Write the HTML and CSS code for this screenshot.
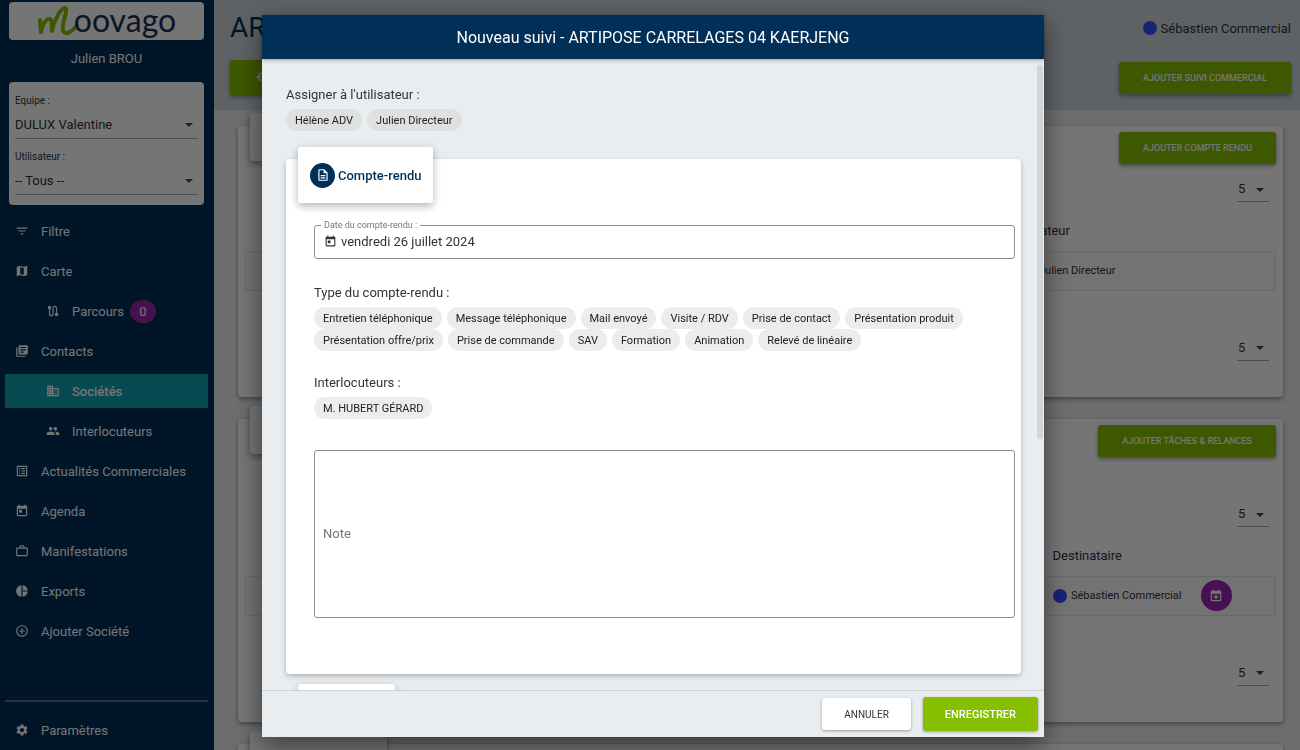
FILE: index.html
```html
<!DOCTYPE html>
<html lang="fr">
<head>
<meta charset="utf-8">
<title>Moovago - Nouveau suivi</title>
<link rel="stylesheet" href="styles.css">
</head>
<body>
<svg class="sprite" aria-hidden="true">
  <symbol id="i-filter" viewBox="0 0 24 24"><path d="M10 18h4v-2h-4v2zM3 6v2h18V6H3zm3 7h12v-2H6v2z"/></symbol>
  <symbol id="i-map" viewBox="0 0 24 24"><path d="M20.5 3l-.16.03L15 5.1 9 3 3.36 4.9c-.21.07-.36.25-.36.48V20.5c0 .28.22.5.5.5l.16-.03L9 18.9l6 2.1 5.64-1.9c.21-.07.36-.25.36-.48V3.5c0-.28-.22-.5-.5-.5zM15 19l-6-2.11V5l6 2.11V19z"/></symbol>
  <symbol id="i-route" viewBox="0 0 24 24"><path d="M19 15.18V7c0-2.21-1.79-4-4-4s-4 1.79-4 4v10c0 1.1-.9 2-2 2s-2-.9-2-2V8.82C8.16 8.4 9 7.3 9 6c0-1.66-1.34-3-3-3S3 4.34 3 6c0 1.3.84 2.4 2 2.82V17c0 2.21 1.79 4 4 4s4-1.79 4-4V7c0-1.1.9-2 2-2s2 .9 2 2v8.18c-1.16.41-2 1.51-2 2.82 0 1.66 1.34 3 3 3s3-1.34 3-3c0-1.3-.84-2.4-2-2.82z"/></symbol>
  <symbol id="i-books" viewBox="0 0 24 24"><path d="M4 6H2v14c0 1.1.9 2 2 2h14v-2H4V6zm16-4H8c-1.1 0-2 .9-2 2v12c0 1.1.9 2 2 2h12c1.1 0 2-.9 2-2V4c0-1.1-.9-2-2-2zm-1 9H9V9h10v2zm-4 4H9v-2h6v2zm4-8H9V5h10v2z"/></symbol>
  <symbol id="i-business" viewBox="0 0 24 24"><path d="M12 7V3H2v18h20V7H12zM6 19H4v-2h2v2zm0-4H4v-2h2v2zm0-4H4V9h2v2zm0-4H4V5h2v2zm4 12H8v-2h2v2zm0-4H8v-2h2v2zm0-4H8V9h2v2zm0-4H8V5h2v2zm10 12h-8v-2h2v-2h-2v-2h2v-2h-2V9h8v10zm-2-8h-2v2h2v-2zm0 4h-2v2h2v-2z"/></symbol>
  <symbol id="i-people" viewBox="0 0 24 24"><path d="M16 11c1.66 0 2.99-1.34 2.99-3S17.66 5 16 5c-1.66 0-3 1.34-3 3s1.34 3 3 3zm-8 0c1.66 0 2.99-1.34 2.99-3S9.66 5 8 5C6.34 5 5 6.34 5 8s1.34 3 3 3zm0 2c-2.33 0-7 1.17-7 3.5V19h14v-2.5c0-2.33-4.67-3.5-7-3.5zm8 0c-.29 0-.62.02-.97.05 1.16.84 1.97 1.97 1.97 3.45V19h6v-2.5c0-2.33-4.67-3.5-7-3.5z"/></symbol>
  <symbol id="i-list" viewBox="0 0 24 24"><path d="M19 5v14H5V5h14m1.1-2H3.9c-.5 0-.9.4-.9.9v16.2c0 .4.4.9.9.9h16.2c.4 0 .9-.5.9-.9V3.9c0-.5-.5-.9-.9-.9zM11 7h6v2h-6V7zm0 4h6v2h-6v-2zm0 4h6v2h-6v-2zM7 7h2v2H7V7zm0 4h2v2H7v-2zm0 4h2v2H7v-2z"/></symbol>
  <symbol id="i-today" viewBox="0 0 24 24"><path d="M19 3h-1V1h-2v2H8V1H6v2H5c-1.11 0-1.99.9-1.99 2L3 19c0 1.1.89 2 2 2h14c1.1 0 2-.9 2-2V5c0-1.1-.9-2-2-2zm0 16H5V8h14v11zM7 10h5v5H7z"/></symbol>
  <symbol id="i-work" viewBox="0 0 24 24"><path d="M14 6V4h-4v2h4zM4 8v11h16V8H4zm16-2c1.11 0 2 .89 2 2v11c0 1.11-.89 2-2 2H4c-1.11 0-2-.89-2-2l.01-11c0-1.11.88-2 1.99-2h4V4c0-1.11.89-2 2-2h4c1.11 0 2 .89 2 2v2h4z"/></symbol>
  <symbol id="i-pie" viewBox="0 0 24 24"><path d="M11 2v20c-5.07-.5-9-4.79-9-10s3.93-9.5 9-10zm2.03 0v8.99H22c-.47-4.74-4.24-8.52-8.97-8.99zm0 11.01V22c4.74-.47 8.5-4.25 8.97-8.99h-8.97z"/></symbol>
  <symbol id="i-add" viewBox="0 0 24 24"><path d="M13 7h-2v4H7v2h4v4h2v-4h4v-2h-4V7zm-1-5C6.48 2 2 6.48 2 12s4.48 10 10 10 10-4.48 10-10S17.52 2 12 2zm0 18c-4.41 0-8-3.59-8-8s3.59-8 8-8 8 3.59 8 8-3.59 8-8 8z"/></symbol>
  <symbol id="i-settings" viewBox="0 0 24 24"><path d="M19.14 12.94c.04-.3.06-.61.06-.94 0-.32-.02-.64-.07-.94l2.03-1.58c.18-.14.23-.41.12-.61l-1.92-3.32c-.12-.22-.37-.29-.59-.22l-2.39.96c-.5-.38-1.03-.7-1.62-.94l-.36-2.54c-.04-.24-.24-.41-.48-.41h-3.84c-.24 0-.43.17-.47.41l-.36 2.54c-.59.24-1.13.57-1.62.94l-2.39-.96c-.22-.08-.47 0-.59.22L2.74 8.87c-.12.21-.08.47.12.61l2.03 1.58c-.05.3-.09.63-.09.94s.02.64.07.94l-2.03 1.58c-.18.14-.23.41-.12.61l1.92 3.32c.12.22.37.29.59.22l2.39-.96c.5.38 1.03.7 1.62.94l.36 2.54c.05.24.24.41.48.41h3.84c.24 0 .44-.17.47-.41l.36-2.54c.59-.24 1.13-.56 1.62-.94l2.39.96c.22.08.47 0 .59-.22l1.92-3.32c.12-.22.07-.47-.12-.61l-2.01-1.58zM12 15.6c-1.98 0-3.6-1.62-3.6-3.6s1.62-3.6 3.6-3.6 3.6 1.62 3.6 3.6-1.62 3.6-3.6 3.6z"/></symbol>
  <symbol id="i-doc" viewBox="0 0 24 24"><path d="M8 16h8v2H8zm0-4h8v2H8zm6-10H6c-1.1 0-2 .9-2 2v16c0 1.1.89 2 1.99 2H18c1.1 0 2-.9 2-2V8l-6-6zm4 18H6V4h7v5h5v11z"/></symbol>
  <symbol id="i-event-add" viewBox="0 0 24 24"><path d="M19 3h-1V1h-2v2H8V1H6v2H5c-1.11 0-1.99.9-1.99 2L3 19c0 1.1.89 2 2 2h14c1.1 0 2-.9 2-2V5c0-1.1-.9-2-2-2zm0 16H5V8h14v11zM11 9.5h2v3h3v2h-3v3h-2v-3H8v-2h3z"/></symbol>
  <symbol id="i-back" viewBox="0 0 24 24"><path d="M20 11H7.83l5.59-5.59L12 4l-8 8 8 8 1.41-1.41L7.83 13H20v-2z"/></symbol>
</svg>

<div class="app">
  <aside class="sidebar">
    <a class="logo" href="#" aria-label="Moovago">
      <svg class="logo-mark" viewBox="0 0 43 36" aria-hidden="true"><path d="M3 17L4 29C5 22 9 15 13 16C16 17 14 23 15 28C17 17 24 5 28 5C32 6 24 21 26 28C29 33 36 28 40 22"/></svg>
      <span class="logo-text">oovago</span>
    </a>
    <p class="user">Julien BROU</p>
    <div class="filters">
      <label for="equipe">Equipe :</label>
      <div class="select"><select id="equipe"><option>DULUX Valentine</option></select></div>
      <label for="utilisateur">Utilisateur :</label>
      <div class="select"><select id="utilisateur"><option>-- Tous --</option></select></div>
    </div>
    <nav class="nav">
      <a href="#"><svg class="icon"><use href="#i-filter"/></svg>Filtre</a>
      <a href="#"><svg class="icon"><use href="#i-map"/></svg>Carte</a>
      <a href="#" class="sub"><svg class="icon"><use href="#i-route"/></svg>Parcours<span class="count">0</span></a>
      <a href="#"><svg class="icon"><use href="#i-books"/></svg>Contacts</a>
      <a href="#" class="sub active"><svg class="icon"><use href="#i-business"/></svg>Sociétés</a>
      <a href="#" class="sub"><svg class="icon"><use href="#i-people"/></svg>Interlocuteurs</a>
      <a href="#"><svg class="icon"><use href="#i-list"/></svg>Actualités Commerciales</a>
      <a href="#"><svg class="icon"><use href="#i-today"/></svg>Agenda</a>
      <a href="#"><svg class="icon"><use href="#i-work"/></svg>Manifestations</a>
      <a href="#"><svg class="icon"><use href="#i-pie"/></svg>Exports</a>
      <a href="#"><svg class="icon"><use href="#i-add"/></svg>Ajouter Société</a>
    </nav>
    <nav class="nav nav-bottom">
      <a href="#"><svg class="icon"><use href="#i-settings"/></svg>Paramètres</a>
    </nav>
  </aside>

  <main class="main">
    <header class="page-head">
      <div class="row">
        <h1>ARTIPOSE</h1>
        <span class="owner"><i class="dot"></i>Sébastien Commercial</span>
      </div>
      <div class="row">
        <button class="btn back" aria-label="Retour"><svg class="icon"><use href="#i-back"/></svg></button>
        <button class="btn">AJOUTER SUIVI COMMERCIAL</button>
      </div>
    </header>
    <div class="panels">
      <section class="panel">
        <div class="tab"></div>
        <button class="btn">AJOUTER COMPTE RENDU</button>
        <div class="select mini"><select aria-label="Lignes par page"><option>5</option></select></div>
        <table class="reports">
          <thead><tr><th>Créateur</th></tr></thead>
          <tbody><tr><td><span class="person"><i class="dot"></i>Julien Directeur</span></td></tr></tbody>
        </table>
        <div class="select mini"><select aria-label="Lignes par page, bas"><option>5</option></select></div>
      </section>
      <section class="panel tall">
        <div class="tab"></div>
        <button class="btn">AJOUTER TÂCHES &amp; RELANCES</button>
        <div class="select mini"><select aria-label="Tâches par page"><option>5</option></select></div>
        <table class="tasks">
          <thead><tr><th>Destinataire</th><th></th></tr></thead>
          <tbody><tr><td><span class="person"><i class="dot"></i>Sébastien Commercial</span></td><td class="action"><button class="round" aria-label="Planifier"><svg class="icon"><use href="#i-event-add"/></svg></button></td></tr></tbody>
        </table>
        <div class="select mini"><select aria-label="Tâches par page, bas"><option>5</option></select></div>
      </section>
      <section class="panel"><div class="tab wide"></div></section>
    </div>
  </main>
</div>

<div class="overlay">
  <div class="modal" role="dialog" aria-modal="true" aria-labelledby="modal-title">
    <h2 class="modal-head" id="modal-title">Nouveau suivi - ARTIPOSE CARRELAGES 04 KAERJENG</h2>
    <div class="modal-body">
      <p class="label">Assigner à l'utilisateur :</p>
      <div class="chips dark">
        <button>Hélène ADV</button><button>Julien Directeur</button>
      </div>
      <section class="card">
        <h3 class="card-tab"><span class="badge"><svg class="icon"><use href="#i-doc"/></svg></span>Compte-rendu</h3>
        <fieldset class="date">
          <legend><label for="date">Date du compte-rendu :</label></legend>
          <svg class="icon"><use href="#i-today"/></svg>
          <input id="date" type="text" value="vendredi 26 juillet 2024">
        </fieldset>
        <p class="label">Type du compte-rendu :</p>
        <div class="chips">
          <button>Entretien téléphonique</button><button>Message téléphonique</button><button>Mail envoyé</button><button>Visite / RDV</button><button>Prise de contact</button><button>Présentation produit</button>
        </div>
        <div class="chips tight">
          <button>Présentation offre/prix</button><button>Prise de commande</button><button>SAV</button><button>Formation</button><button>Animation</button><button>Relevé de linéaire</button>
        </div>
        <p class="label">Interlocuteurs :</p>
        <div class="chips">
          <button>M. HUBERT GÉRARD</button>
        </div>
        <textarea class="note" aria-label="Note" placeholder="Note"></textarea>
      </section>
      <section class="card next"><div class="card-tab"></div></section>
      <span class="thumb"></span>
    </div>
    <footer class="modal-foot">
      <button class="cancel">ANNULER</button>
      <button class="save">ENREGISTRER</button>
    </footer>
  </div>
</div>
</body>
</html>
```
FILE: styles.css
```css
* { box-sizing: border-box; }
body {
  margin: 0;
  height: 100vh;
  overflow: hidden;
  font-family: Roboto, "Liberation Sans", sans-serif;
  font-size: 13px;
  color: #333;
}
h1, h2, h3, p { margin: 0; font-weight: 400; }
a { color: inherit; text-decoration: none; }
button, input, select, textarea { font: inherit; color: inherit; border: 0; }
button { cursor: pointer; }
.sprite { position: absolute; width: 0; height: 0; }
.icon { width: 14px; height: 14px; fill: currentColor; flex: none; }

.app { display: flex; height: 100vh; }

/* Sidebar */
.sidebar {
  width: 214px;
  flex: none;
  display: flex;
  flex-direction: column;
  padding: 2px 6px 3px 5px;
  background: #003058;
  color: #fff;
}
.logo {
  display: flex;
  height: 38px;
  margin: 0 4px;
  justify-content: center;
  align-items: center;
  background: #fff;
  border-radius: 4px;
}
.logo-mark { width: 43px; height: 36px; margin-right: -6px; flex: none; }
.logo-mark path { fill: none; stroke: #85bf00; stroke-width: 4; stroke-linecap: round; stroke-linejoin: round; }
.logo-text { font: 32px/32px Lato, sans-serif; color: #1c2c52; padding-bottom: 2px; }
.user { text-align: center; font-size: 13px; line-height: 18px; margin: 10px 0 14px; }
.filters {
  margin: 0 4px;
  padding: 10px 6px 10px;
  background: #fff;
  border-radius: 4px;
  color: #333;
}
.filters label { display: block; font-size: 10px; line-height: 18px; }
.filters .select { margin-bottom: 9px; }
.filters .select:last-child { margin-bottom: 0; }
.select { position: relative; border-bottom: 1px solid #aaa; }
.select::after {
  content: "";
  position: absolute;
  right: 5px;
  top: 50%;
  margin-top: -1px;
  border: 4px solid transparent;
  border-top-color: #444;
  border-bottom: 0;
}
.select select {
  display: block;
  width: 100%;
  height: 28px;
  padding: 0;
  appearance: none;
  background: transparent;
}
.nav { display: flex; flex-direction: column; gap: 6px; padding-top: 9px; }
.nav a {
  display: flex;
  align-items: center;
  gap: 12px;
  height: 34px;
  padding-left: 10px;
}
.nav a.sub { padding-left: 41px; }
.nav a.active { background: #12a2b0; font-weight: 500; }
.count {
  margin-left: -6px;
  width: 26px;
  line-height: 23px;
  border-radius: 50%;
  background: #9c27b0;
  text-align: center;
}
.nav-bottom { margin-top: auto; border-top: 2px solid #4f7290; padding-top: 11px; }

/* Page behind the dialog */
.main { flex: 1; min-width: 0; background: #ebeef1; display: flex; flex-direction: column; }
.page-head {
  flex: none;
  height: 110px;
  padding: 8px 9px 0 16px;
  background: #cfd6dc;
}
.row { display: flex; justify-content: space-between; align-items: center; }
h1 { font-size: 28px; line-height: 40px; color: #003058; }
.owner { display: flex; align-items: center; gap: 4px; }
.dot { width: 14px; height: 14px; border-radius: 50%; background: #304ffe; flex: none; }
.btn {
  height: 32px;
  padding: 0 24px;
  border-radius: 3px;
  background: #85bf00;
  color: #fff;
  font-size: 9px;
  font-weight: 500;
  box-shadow: 0 2px 4px rgba(0,0,0,.4);
}
.page-head .row + .row { margin-top: 12px; }
.btn.back { height: 35px; }
.panels { flex: 1; min-height: 0; overflow: hidden; padding: 16px 17px 0 24px; }
.panel {
  position: relative;
  display: flex;
  flex-direction: column;
  align-items: flex-end;
  height: 271px;
  margin-bottom: 22px;
  padding: 6px 7px;
  background: #fff;
  border-radius: 4px;
  box-shadow: 0 2px 5px rgba(0,0,0,.4);
}
.panel.tall { height: 303px; }
.tab {
  position: absolute;
  left: 12px;
  top: -13px;
  width: 90px;
  height: 48px;
  background: #fff;
  border-radius: 3px;
  box-shadow: 0 3px 7px rgba(0,0,0,.4);
}
.tab.wide { width: 137px; }
.mini { width: 32px; margin: 12px 7px 0 0; }
.mini select { height: 25px; padding-left: 1px; }
.panel table { width: 100%; border-collapse: collapse; margin: 15px 0 44px; }
.tall .mini { margin-top: 44px; }
.panel table + .mini { margin-top: 0; }
.panel th { height: 34px; padding: 0 0 6px; text-align: left; font-weight: 400; }
.panel td { height: 39px; padding: 0; border: 1px solid #e4e4e4; background: #fafafa; font-size: 11px; }
.panel .reports th, .panel .reports td { padding-left: calc(100% - 255px); }
.panel .tasks th:first-child, .panel .tasks td:first-child { padding-left: calc(100% - 223px); border-right: 0; }
.tasks td.action { width: 75px; border-left: 0; }
.tasks th:last-child { width: 75px; }
.person { display: flex; align-items: center; gap: 4px; white-space: nowrap; }
.round {
  width: 31px;
  height: 31px;
  padding: 0;
  border-radius: 50%;
  background: #9c27b0;
  color: #fff;
  display: flex;
  align-items: center;
  justify-content: center;
}

/* Dialog */
.overlay {
  position: fixed;
  inset: 0;
  display: flex;
  padding: 15px 256px 13px 262px;
  background: rgba(0,0,0,.54);
}
.modal {
  flex: 1;
  min-width: 0;
  display: flex;
  flex-direction: column;
  background: #e9edf0;
  box-shadow: 0 8px 24px rgba(0,0,0,.5);
}
.modal-head {
  position: relative;
  z-index: 1;
  padding-top: 1px;
  background: #003058;
  color: #fff;
  font-size: 16px;
  line-height: 43px;
  text-align: center;
  box-shadow: 0 1px 4px rgba(0,0,0,.35);
}
.modal-body { position: relative; flex: 1; min-height: 0; overflow: hidden; padding: 26px 23px 0 24px; }
.thumb {
  position: absolute;
  right: 1px;
  top: 6px;
  width: 6px;
  height: 374px;
  border-radius: 3px;
  background: #d2d5d8;
}
.label { line-height: 20px; }
.chips { display: flex; flex-wrap: wrap; column-gap: 5px; margin-top: 4px; }
.chips.tight { margin-top: 0; }
.chips button {
  height: 22px;
  padding: 0 9px;
  border-radius: 11px;
  background: #ececec;
  color: #222;
  font-size: 11px;
}
.chips.dark button { background: #dfe0e0; }
.card {
  margin-top: 28px;
  padding: 0 6px 56px 28px;
  background: #fff;
  border-radius: 4px;
  box-shadow: 0 2px 5px rgba(0,0,0,.25);
}
.card-tab {
  display: flex;
  align-items: center;
  gap: 3px;
  width: fit-content;
  height: 56px;
  margin: 0 0 4px -16px;
  padding: 0 12px;
  transform: translateY(-12px);
  background: #fff;
  border-radius: 3px;
  box-shadow: 0 3px 8px rgba(0,0,0,.3);
  color: #003058;
  font-size: 13px;
  font-weight: 500;
}
.badge {
  display: flex;
  align-items: center;
  justify-content: center;
  width: 25px;
  height: 25px;
  border-radius: 50%;
  background: #003058;
  color: #fff;
}
.date {
  display: flex;
  align-items: center;
  gap: 4px;
  min-width: 0;
  margin: 0;
  padding: 0 9px 7px;
  border: 1px solid #8c8c8c;
  border-radius: 3px;
}
.date legend { margin-left: -3px; padding: 0 3px; font-size: 9px; line-height: 12px; color: #777; }
.date .icon { width: 13px; height: 13px; }
.date input { flex: 1; min-width: 0; height: 20px; padding: 0; background: transparent; outline: 0; }
.date + .label { margin-top: 24px; }
.chips + .label { margin-top: 22px; }
.note {
  display: block;
  width: 100%;
  height: 168px;
  margin-top: 31px;
  padding: 73px 8px;
  border: 1px solid #8c8c8c;
  border-radius: 3px;
  background: transparent;
  resize: none;
  line-height: 20px;
}
.note::placeholder { color: #757575; opacity: 1; }
.card.next { margin-top: 22px; }
.next .card-tab { width: 97px; }
.modal-foot {
  display: flex;
  justify-content: flex-end;
  align-items: center;
  gap: 12px;
  padding: 6px 6px;
  border-top: 1px solid #ccd2d6;
}
.modal-foot button {
  height: 32px;
  padding: 0 22px;
  border-radius: 3px;
  background: #fff;
  font-size: 10px;
  box-shadow: 0 1px 3px rgba(0,0,0,.35);
}
.modal-foot .save { height: 34px; background: #85bf00; color: #fff; font-size: 11px; font-weight: 500; }
```
